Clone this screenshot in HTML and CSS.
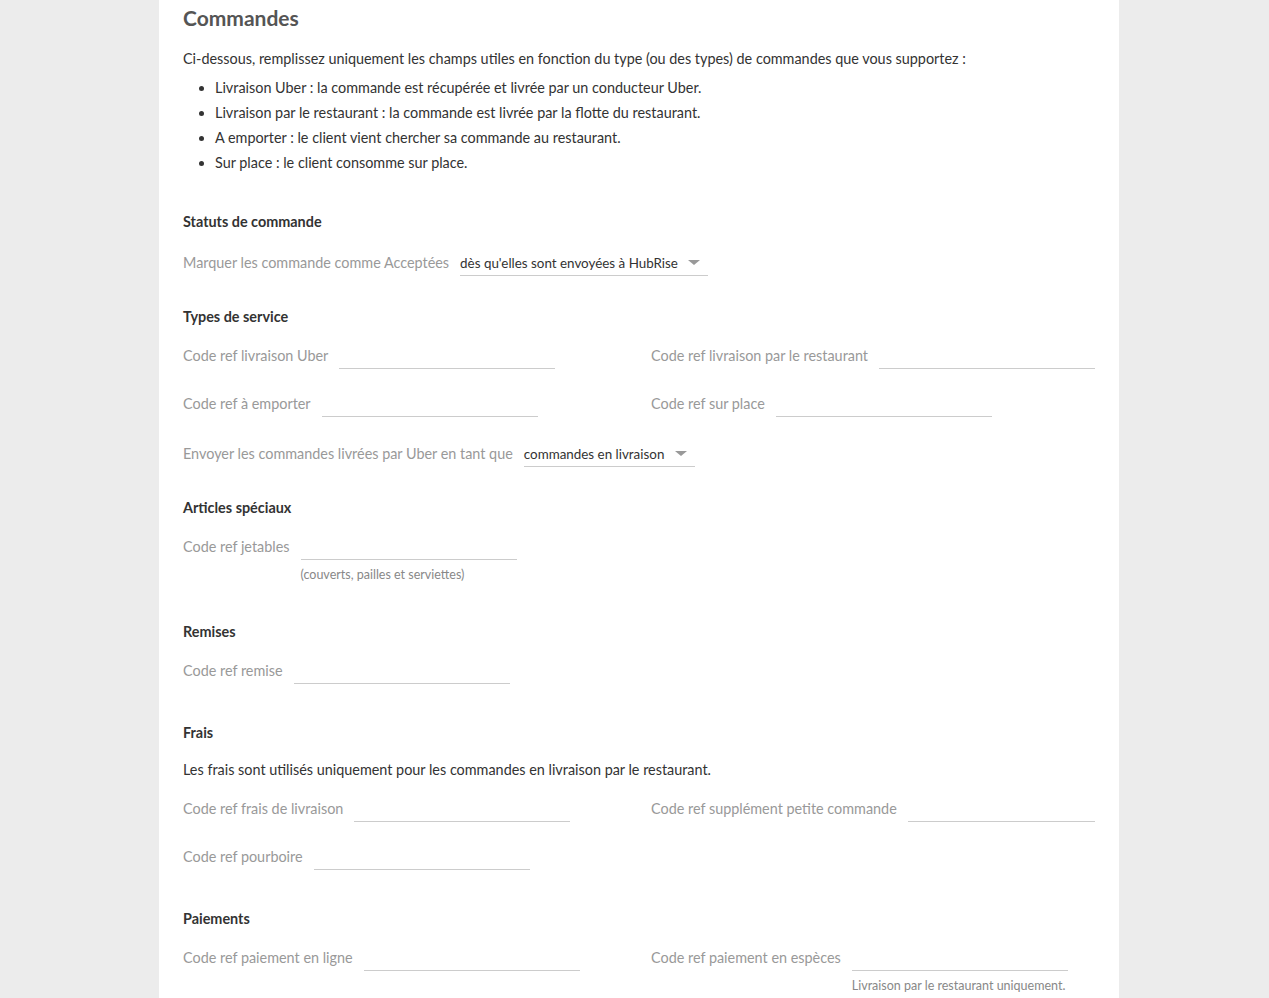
FILE: index.html
```html
<!DOCTYPE html>
<html lang="fr">
<head>
<meta charset="utf-8">
<title>Commandes</title>
<link rel="stylesheet" href="styles.css">
</head>
<body>
<main class="panel">
  <h1 class="title">Commandes</h1>
  <p class="intro">Ci-dessous, remplissez uniquement les champs utiles en fonction du type (ou des types) de commandes que vous supportez :</p>
  <ul class="types">
    <li>Livraison Uber : la commande est récupérée et livrée par un conducteur Uber.</li>
    <li>Livraison par le restaurant : la commande est livrée par la flotte du restaurant.</li>
    <li>A emporter : le client vient chercher sa commande au restaurant.</li>
    <li>Sur place : le client consomme sur place.</li>
  </ul>

  <section class="section s-statuts">
    <h2 class="heading">Statuts de commande</h2>
    <div class="field">
      <span class="label">Marquer les commande comme Acceptées</span>
      <div class="select sel-status"><span class="sel-text">dès qu'elles sont envoyées à HubRise</span><span class="caret"></span></div>
    </div>
  </section>

  <section class="section s-types">
    <h2 class="heading">Types de service</h2>
    <div class="grid">
      <div class="field"><span class="label">Code ref livraison Uber</span><span class="input"></span></div>
      <div class="field"><span class="label">Code ref livraison par le restaurant</span><span class="input"></span></div>
      <div class="field"><span class="label">Code ref à emporter</span><span class="input"></span></div>
      <div class="field"><span class="label">Code ref sur place</span><span class="input"></span></div>
    </div>
    <div class="field f-send">
      <span class="label">Envoyer les commandes livrées par Uber en tant que</span>
      <div class="select sel-send"><span class="sel-text">commandes en livraison</span><span class="caret"></span></div>
    </div>
  </section>

  <section class="section s-articles">
    <h2 class="heading">Articles spéciaux</h2>
    <div class="field"><span class="label">Code ref jetables</span><div class="input-col"><span class="input"></span><span class="help">(couverts, pailles et serviettes)</span></div></div>
  </section>

  <section class="section s-remises">
    <h2 class="heading">Remises</h2>
    <div class="field"><span class="label">Code ref remise</span><span class="input"></span></div>
  </section>

  <section class="section s-frais">
    <h2 class="heading">Frais</h2>
    <p class="note">Les frais sont utilisés uniquement pour les commandes en livraison par le restaurant.</p>
    <div class="grid">
      <div class="field"><span class="label">Code ref frais de livraison</span><span class="input"></span></div>
      <div class="field"><span class="label">Code ref supplément petite commande</span><span class="input"></span></div>
      <div class="field"><span class="label">Code ref pourboire</span><span class="input"></span></div>
    </div>
  </section>

  <section class="section s-paiements">
    <h2 class="heading">Paiements</h2>
    <div class="grid">
      <div class="field"><span class="label">Code ref paiement en ligne</span><span class="input"></span></div>
      <div class="field"><span class="label">Code ref paiement en espèces</span><div class="input-col"><span class="input"></span><span class="help">Livraison par le restaurant uniquement.</span></div></div>
    </div>
  </section>
</main>
</body>
</html>
```

FILE: styles.css
```css
html, body {
  margin: 0;
  padding: 0;
}
body {
  background: #ececec;
  font-family: Lato, "Open Sans", "Liberation Sans", sans-serif;
  font-size: 14.4px;
  color: #333;
  height: 998px;
  overflow: hidden;
}
.panel {
  margin-left: 159px;
  width: 960px;
  box-sizing: border-box;
  background: #fff;
  padding: 5px 24px 40px 24px;
  min-height: 998px;
}
.title {
  margin: 0;
  font-size: 21px;
  line-height: 26px;
  font-weight: 700;
  color: #555;
}
.intro {
  margin: 18px 0 0 0;
  line-height: 20px;
}
.types {
  margin: 6px 0 0 0;
  padding-left: 32px;
  line-height: 25px;
}
.section {
  margin: 0;
}
.heading {
  margin: 0 0 16px 0;
  font-size: 14.4px;
  line-height: 20px;
  font-weight: 700;
  color: #333;
}
.s-statuts { margin-top: 37px; }
.s-statuts .heading { margin-bottom: 18px; }
.s-types { margin-top: 31px; }
.s-articles { margin-top: 31px; }
.s-remises { margin-top: 39px; }
.s-frais { margin-top: 39px; }
.s-paiements { margin-top: 39px; }

.grid {
  display: grid;
  grid-template-columns: 1fr 1fr;
  column-gap: 24px;
  row-gap: 22px;
}
.field {
  display: flex;
  align-items: flex-start;
  min-width: 0;
}
.label {
  color: #999;
  line-height: 26px;
  white-space: nowrap;
  margin-right: 11px;
  flex: none;
}
.input {
  display: block;
  flex: 0 1 216px;
  width: 216px;
  min-width: 0;
  height: 26px;
  box-sizing: border-box;
  border-bottom: 1px solid #ccc;
}
.input-col {
  display: flex;
  flex-direction: column;
  flex: 0 1 216px;
  min-width: 0;
}
.input-col .input {
  flex: none;
  width: 100%;
}
.help {
  font-size: 12.5px;
  line-height: 16px;
  margin-top: 7px;
  color: #888;
  white-space: nowrap;
}

.select {
  display: flex;
  align-items: center;
  height: 26px;
  box-sizing: border-box;
  border-bottom: 1px solid #ccc;
  font-size: 13.4px;
  color: #333;
}
.sel-status { width: 248px; }
.sel-send { width: 171px; }
.f-send { margin-top: 24px; }
.sel-text { white-space: nowrap; }
.caret {
  width: 0;
  height: 0;
  border-left: 6px solid transparent;
  border-right: 6px solid transparent;
  border-top: 5px solid #999;
  margin-left: auto;
  margin-right: 8px;
}
.note {
  margin: 17px 0 16px 0;
  line-height: 20px;
}
```
